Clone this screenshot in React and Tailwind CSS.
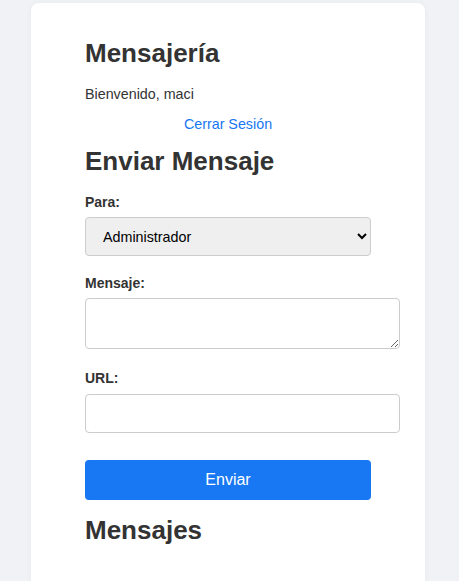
import React, { useState } from 'react';

const font = { fontFamily: '"Liberation Sans", Arial, sans-serif' };

export default function App() {
  const [to, setTo] = useState('admin');
  const [message, setMessage] = useState('');
  const [url, setUrl] = useState('');

  return (
    <div className="min-h-[581px] bg-[#f0f2f5] pt-[3px] pl-[31px]" style={font}>
      <div className="w-[394px] min-h-[600px] bg-white rounded-[8px] shadow-[0_0_6px_rgba(0,0,0,0.04)] px-[54px] pt-[35px] pb-[40px] text-[#333]">
        {/* Header */}
        <h2 className="text-[26px] leading-[30px] font-bold">Mensajería</h2>
        <p className="mt-[16px] text-[14.3px] leading-[20px]">Bienvenido, maci</p>
        <div className="mt-[10px] text-center text-[14.3px] leading-[20px]">
          <a href="#" className="text-[#1877f2]">Cerrar Sesión</a>
        </div>

        {/* Form */}
        <h2 className="mt-[12px] text-[26px] leading-[30px] font-bold">Enviar Mensaje</h2>
        <form onSubmit={(e) => e.preventDefault()}>
          <label className="block mt-[16px] text-[14px] leading-[20px] font-bold">Para:</label>
          <select
            value={to}
            onChange={(e) => setTo(e.target.value)}
            className="mt-[5px] block w-[286px] h-[39px] pl-[13px] pr-[8px] bg-[#efefef] border border-[#ccc] rounded-[4px] text-[14.3px] text-black"
          >
            <option value="admin">Administrador</option>
          </select>

          <label className="block mt-[17px] text-[14px] leading-[20px] font-bold">Mensaje:</label>
          <textarea
            value={message}
            onChange={(e) => setMessage(e.target.value)}
            className="mt-[5px] block w-[315px] h-[51px] p-[10px] bg-white border border-[#ccc] rounded-[4px] text-[14px]"
          />

          <label className="block mt-[19px] text-[14px] leading-[20px] font-bold">URL:</label>
          <input
            type="text"
            value={url}
            onChange={(e) => setUrl(e.target.value)}
            className="mt-[6px] block w-[315px] h-[39px] px-[10px] bg-white border border-[#ccc] rounded-[4px] text-[14px]"
          />

          <button
            type="submit"
            className="mt-[27px] block w-[286px] h-[40px] bg-[#1877f2] text-white rounded-[4px] text-[16px]"
          >
            Enviar
          </button>
        </form>

        <h2 className="mt-[15px] text-[26px] leading-[30px] font-bold">Mensajes</h2>
      </div>
    </div>
  );
}
